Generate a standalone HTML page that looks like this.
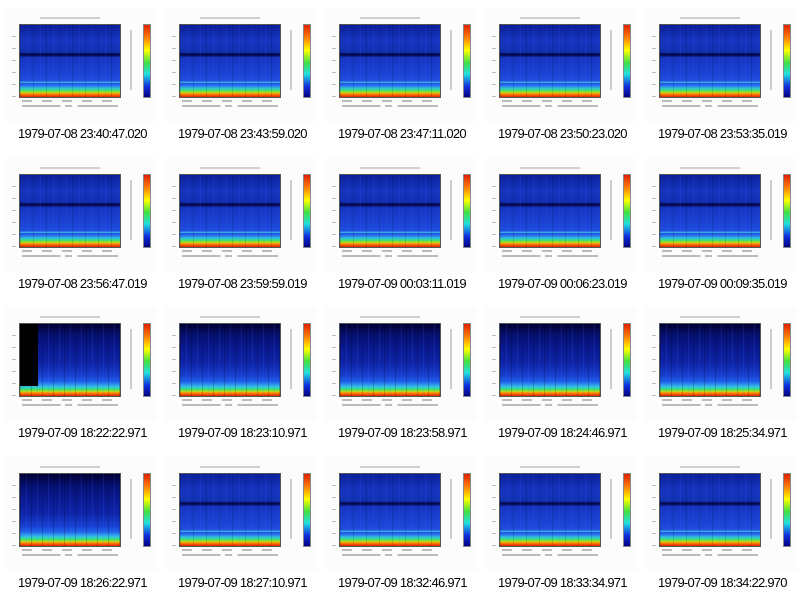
<!DOCTYPE html>
<html><head><meta charset="utf-8"><style>
body{margin:0;width:800px;height:596px;background:#fff;position:relative;overflow:hidden;font-family:"Liberation Sans",sans-serif}
.c{position:absolute;width:160px;height:150px}
.bg{position:absolute;left:5px;top:8px;width:152px;height:114px;background:#fcfcfc}
.t{position:absolute;left:40px;top:17px;width:60px;height:2px;background:#d0d0d0}
.p{position:absolute;left:20px;top:25px;width:100px;height:72px;box-shadow:0 0 0 1px #555;
background:
repeating-linear-gradient(90deg,rgba(0,0,40,.15) 0 1px,transparent 1px 7px,rgba(80,120,255,.1) 7px 8px,transparent 8px 13px),
linear-gradient(#0c1f9a 0%,#1535c0 22%,#1230b0 38%,#050a50 40%,#050a50 42%,#1535c0 45%,#1c45d8 70%,#2050e0 78%,#40c8e8 79.5%,#2050e0 81%,#2a70f0 84%,#30c8d8 88%,#40e060 91%,#b0e020 93.5%,#ff9000 95.5%,#e02000 100%)}
.d .p{background:
repeating-linear-gradient(90deg,rgba(0,0,30,.2) 0 1px,transparent 1px 6px,rgba(60,120,255,.15) 6px 7px,transparent 7px 11px),
linear-gradient(#000030 0%,#061070 15%,#0a1a90 35%,#0e25a8 55%,#1840d0 72%,#2060e8 80%,#30a0f0 85%,#30d0d0 88%,#40e060 91%,#b0e020 93.5%,#ff9000 95.5%,#e02000 100%)}
.cb{position:absolute;left:144px;top:25px;width:6px;height:72px;background:linear-gradient(#e02000,#ff8000 18%,#ffff00 35%,#40e040 52%,#20e0e0 68%,#1030e0 85%,#000080);box-shadow:0 0 0 1px #888}
.yl{position:absolute;left:12px;top:25px;width:4px;height:72px;background:repeating-linear-gradient(transparent 0 11px,#bbb 11px 12px)}
.xl{position:absolute;left:22px;top:100px;width:96px;height:2px;background:repeating-linear-gradient(90deg,#bbb 0 10px,transparent 10px 20px)}
.xl2{position:absolute;left:22px;top:105px;width:96px;height:2px;background:linear-gradient(90deg,#bbb 0 40%,transparent 40% 45%,#bbb 45% 52%,transparent 52% 58%,#bbb 58%)}
.cl{position:absolute;left:130px;top:30px;width:2px;height:60px;background:#ccc}
.cap{position:absolute;left:18px;top:126px;font-size:13px;letter-spacing:-0.75px;color:#000;white-space:nowrap}
.k{position:absolute;left:20px;top:25px;width:18px;height:62px;background:#000}
</style></head><body>
<div class="c" style="left:0;top:0"><div class="bg"></div><div class="t"></div><div class="p"></div><div class="yl"></div><div class="xl"></div><div class="xl2"></div><div class="cl"></div><div class="cb"></div><div class="cap">1979-07-08 23:40:47.020</div></div>
<div class="c" style="left:160px;top:0"><div class="bg"></div><div class="t"></div><div class="p"></div><div class="yl"></div><div class="xl"></div><div class="xl2"></div><div class="cl"></div><div class="cb"></div><div class="cap">1979-07-08 23:43:59.020</div></div>
<div class="c" style="left:320px;top:0"><div class="bg"></div><div class="t"></div><div class="p"></div><div class="yl"></div><div class="xl"></div><div class="xl2"></div><div class="cl"></div><div class="cb"></div><div class="cap">1979-07-08 23:47:11.020</div></div>
<div class="c" style="left:480px;top:0"><div class="bg"></div><div class="t"></div><div class="p"></div><div class="yl"></div><div class="xl"></div><div class="xl2"></div><div class="cl"></div><div class="cb"></div><div class="cap">1979-07-08 23:50:23.020</div></div>
<div class="c" style="left:640px;top:0"><div class="bg"></div><div class="t"></div><div class="p"></div><div class="yl"></div><div class="xl"></div><div class="xl2"></div><div class="cl"></div><div class="cb"></div><div class="cap">1979-07-08 23:53:35.019</div></div>

<div class="c" style="left:0;top:150px"><div class="bg"></div><div class="t"></div><div class="p"></div><div class="yl"></div><div class="xl"></div><div class="xl2"></div><div class="cl"></div><div class="cb"></div><div class="cap">1979-07-08 23:56:47.019</div></div>
<div class="c" style="left:160px;top:150px"><div class="bg"></div><div class="t"></div><div class="p"></div><div class="yl"></div><div class="xl"></div><div class="xl2"></div><div class="cl"></div><div class="cb"></div><div class="cap">1979-07-08 23:59:59.019</div></div>
<div class="c" style="left:320px;top:150px"><div class="bg"></div><div class="t"></div><div class="p"></div><div class="yl"></div><div class="xl"></div><div class="xl2"></div><div class="cl"></div><div class="cb"></div><div class="cap">1979-07-09 00:03:11.019</div></div>
<div class="c" style="left:480px;top:150px"><div class="bg"></div><div class="t"></div><div class="p"></div><div class="yl"></div><div class="xl"></div><div class="xl2"></div><div class="cl"></div><div class="cb"></div><div class="cap">1979-07-09 00:06:23.019</div></div>
<div class="c" style="left:640px;top:150px"><div class="bg"></div><div class="t"></div><div class="p"></div><div class="yl"></div><div class="xl"></div><div class="xl2"></div><div class="cl"></div><div class="cb"></div><div class="cap">1979-07-09 00:09:35.019</div></div>

<div class="c d" style="left:0;top:299px"><div class="bg"></div><div class="t"></div><div class="p"></div><div class="k"></div><div class="yl"></div><div class="xl"></div><div class="xl2"></div><div class="cl"></div><div class="cb"></div><div class="cap">1979-07-09 18:22:22.971</div></div>
<div class="c d" style="left:160px;top:299px"><div class="bg"></div><div class="t"></div><div class="p"></div><div class="yl"></div><div class="xl"></div><div class="xl2"></div><div class="cl"></div><div class="cb"></div><div class="cap">1979-07-09 18:23:10.971</div></div>
<div class="c d" style="left:320px;top:299px"><div class="bg"></div><div class="t"></div><div class="p"></div><div class="yl"></div><div class="xl"></div><div class="xl2"></div><div class="cl"></div><div class="cb"></div><div class="cap">1979-07-09 18:23:58.971</div></div>
<div class="c d" style="left:480px;top:299px"><div class="bg"></div><div class="t"></div><div class="p"></div><div class="yl"></div><div class="xl"></div><div class="xl2"></div><div class="cl"></div><div class="cb"></div><div class="cap">1979-07-09 18:24:46.971</div></div>
<div class="c d" style="left:640px;top:299px"><div class="bg"></div><div class="t"></div><div class="p"></div><div class="yl"></div><div class="xl"></div><div class="xl2"></div><div class="cl"></div><div class="cb"></div><div class="cap">1979-07-09 18:25:34.971</div></div>

<div class="c d" style="left:0;top:449px"><div class="bg"></div><div class="t"></div><div class="p"></div><div class="yl"></div><div class="xl"></div><div class="xl2"></div><div class="cl"></div><div class="cb"></div><div class="cap">1979-07-09 18:26:22.971</div></div>
<div class="c" style="left:160px;top:449px"><div class="bg"></div><div class="t"></div><div class="p"></div><div class="yl"></div><div class="xl"></div><div class="xl2"></div><div class="cl"></div><div class="cb"></div><div class="cap">1979-07-09 18:27:10.971</div></div>
<div class="c" style="left:320px;top:449px"><div class="bg"></div><div class="t"></div><div class="p"></div><div class="yl"></div><div class="xl"></div><div class="xl2"></div><div class="cl"></div><div class="cb"></div><div class="cap">1979-07-09 18:32:46.971</div></div>
<div class="c" style="left:480px;top:449px"><div class="bg"></div><div class="t"></div><div class="p"></div><div class="yl"></div><div class="xl"></div><div class="xl2"></div><div class="cl"></div><div class="cb"></div><div class="cap">1979-07-09 18:33:34.971</div></div>
<div class="c" style="left:640px;top:449px"><div class="bg"></div><div class="t"></div><div class="p"></div><div class="yl"></div><div class="xl"></div><div class="xl2"></div><div class="cl"></div><div class="cb"></div><div class="cap">1979-07-09 18:34:22.970</div></div>
</body></html>
